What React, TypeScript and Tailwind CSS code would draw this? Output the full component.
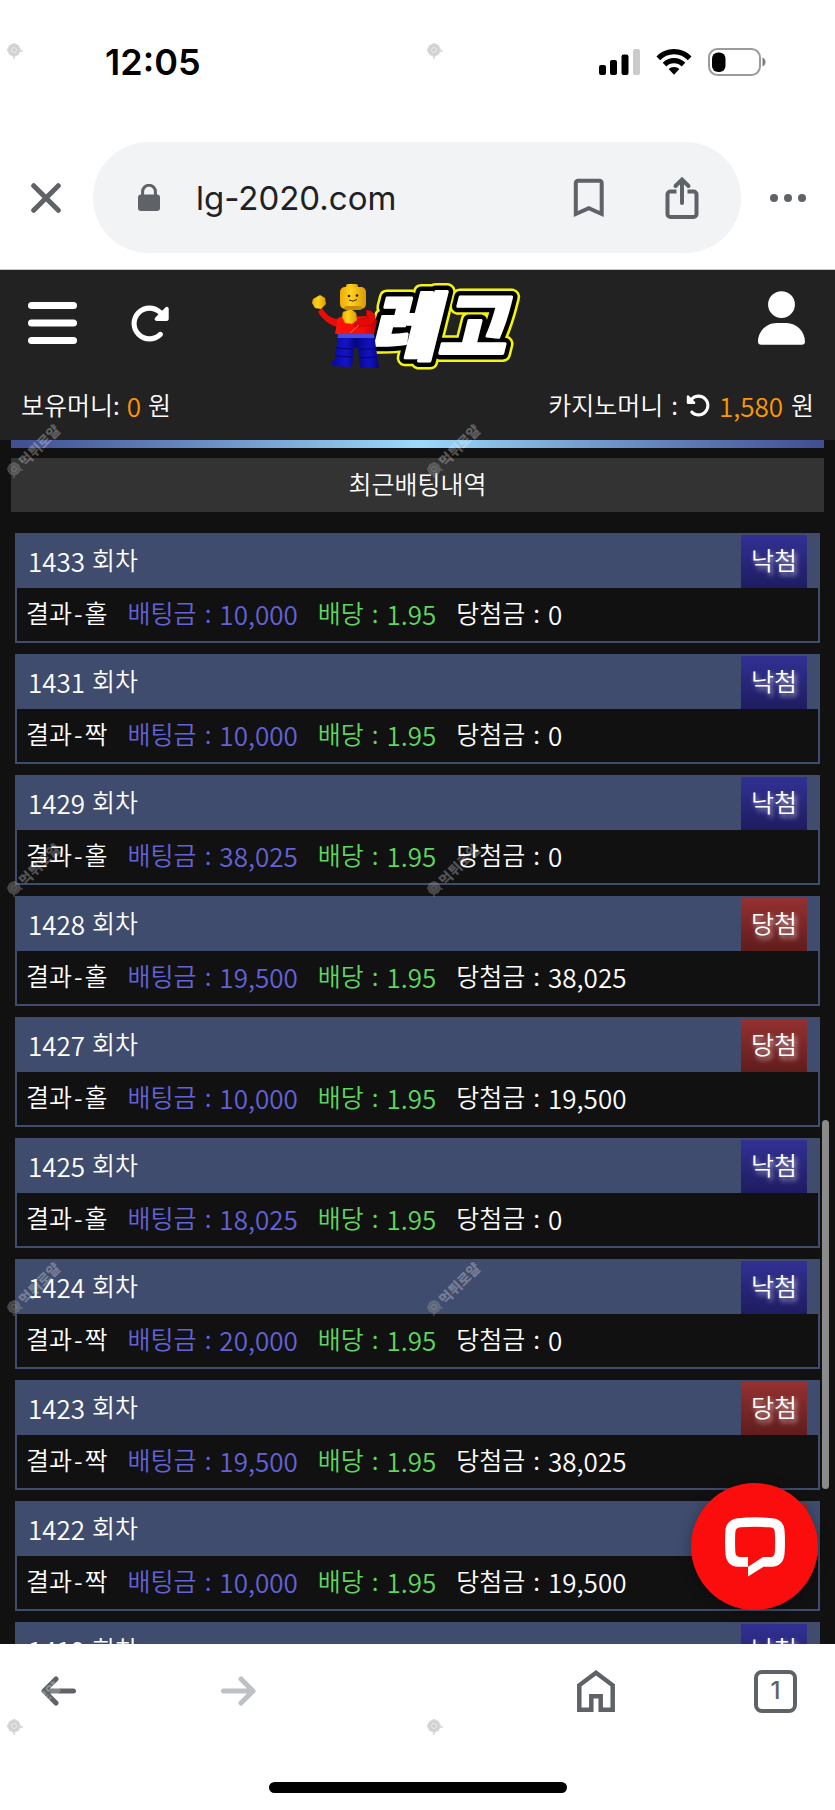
import React from "react";
import { FaRotateLeft, FaRotateRight, FaUser } from "react-icons/fa6";

type Bet = {
  round: number;
  pick: string;
  stake: string;
  odds: string;
  payout: string;
  won: boolean;
};

const bets: Bet[] = [
  { round: 1433, pick: "홀", stake: "10,000", odds: "1.95", payout: "0", won: false },
  { round: 1431, pick: "짝", stake: "10,000", odds: "1.95", payout: "0", won: false },
  { round: 1429, pick: "홀", stake: "38,025", odds: "1.95", payout: "0", won: false },
  { round: 1428, pick: "홀", stake: "19,500", odds: "1.95", payout: "38,025", won: true },
  { round: 1427, pick: "홀", stake: "10,000", odds: "1.95", payout: "19,500", won: true },
  { round: 1425, pick: "홀", stake: "18,025", odds: "1.95", payout: "0", won: false },
  { round: 1424, pick: "짝", stake: "20,000", odds: "1.95", payout: "0", won: false },
  { round: 1423, pick: "짝", stake: "19,500", odds: "1.95", payout: "38,025", won: true },
  { round: 1422, pick: "짝", stake: "10,000", odds: "1.95", payout: "19,500", won: true },
  { round: 1419, pick: "홀", stake: "10,000", odds: "1.95", payout: "0", won: false },
];

function StatusBar() {
  return (
    <div className="flex h-[124px] shrink-0 items-center justify-between pr-[69px] pl-[105px]">
      <span className="text-4xl leading-10 font-semibold text-black">12:05</span>
      <div className="flex items-center gap-4">
        <svg width="41" height="26" viewBox="0 0 41 26" aria-hidden="true">
          <rect x="0" y="16" width="7" height="10" rx="2" />
          <rect x="11" y="11" width="7" height="15" rx="2" />
          <rect x="22.500" y="5.500" width="7" height="20.500" rx="2" />
          <rect x="34" y="0" width="7" height="26" rx="2" fill="#cbcbcb" />
        </svg>
        <svg width="36" height="26" viewBox="0 0 36 26" aria-hidden="true">
          <path d="M0.500 7.500C5 2.800 11 0 18 0s13 2.800 17.500 7.500L31.800 11.300C28.200 7.600 23.500 5.300 18 5.300S7.800 7.600 4.200 11.300Z" />
          <path d="M6.700 13.800C9.700 10.800 13.500 9 18 9s8.300 1.800 11.300 4.800L25.600 17.500C23.600 15.500 21 14.300 18 14.300s-5.600 1.200-7.600 3.200Z" />
          <path d="M12.600 20C14 18.700 15.900 17.900 18 17.900s4 .8 5.400 2.100L18 25.700Z" />
        </svg>
        <svg width="58" height="28" viewBox="0 0 58 28" aria-hidden="true">
          <rect x="1" y="1" width="51" height="26" rx="8.500" fill="none" stroke="#9b9b9b" strokeWidth="2" />
          <rect x="4" y="4.500" width="13.500" height="19.500" rx="6" />
          <path d="M54.500 9.500c2 .8 3 2.500 3 4.500s-1 3.700-3 4.500Z" fill="#7e7e7e" />
        </svg>
      </div>
    </div>
  );
}

function AddressBar() {
  return (
    <div className="flex shrink-0 items-center border-b border-[#c9c9c9] pt-[18px] pb-4 text-[#5f6368]">
      <button type="button" aria-label="닫기" className="flex h-12 w-[93px] items-center pl-[31px]">
        <svg width="30" height="30" viewBox="0 0 30 30" fill="none" stroke="currentColor" strokeWidth="5" strokeLinecap="round">
          <path d="M2.700 2.700 27.300 27.300M27.300 2.700 2.700 27.300" />
        </svg>
      </button>
      <div className="flex h-[111px] flex-1 items-center rounded-full bg-[#f1f3f5] pr-[42px] pl-[45px]">
        <svg width="22" height="28" viewBox="0 0 22 28" aria-hidden="true">
          <rect x="0" y="10.500" width="22" height="16.500" rx="3" fill="currentColor" />
          <path d="M4.600 12V7.700a6.400 6.400 0 0 1 12.800 0V12" fill="none" stroke="currentColor" strokeWidth="3" />
        </svg>
        <a href="#" className="ml-9 flex-1 text-[33px] leading-10 text-[#202124]">
          lg-2020.com
        </a>
        <button type="button" aria-label="북마크" className="flex w-12 justify-center">
          <svg width="32" height="40" viewBox="0 0 32 40" fill="none" stroke="currentColor" strokeWidth="4">
            <path d="M2.800 36V5a2.200 2.200 0 0 1 2.200-2.200h21.500A2.200 2.200 0 0 1 28.700 5V36L15.800 30.200Z" />
          </svg>
        </button>
        <button type="button" aria-label="공유" className="ml-[52px] flex w-[34px] justify-center">
          <svg width="34" height="44" viewBox="0 0 34 44" fill="none" stroke="currentColor" strokeWidth="4">
            <path d="M11.500 15.500H5.500a3 3 0 0 0-3 3V38a3 3 0 0 0 3 3H28.500a3 3 0 0 0 3-3V18.500a3 3 0 0 0-3-3H22.500" />
            <path d="M17 27V4M10.500 10 17 3.500 23.500 10" strokeLinecap="round" />
          </svg>
        </button>
      </div>
      <button type="button" aria-label="메뉴 더보기" className="flex h-12 w-[94px] items-center justify-center">
        <svg width="36" height="8" viewBox="0 0 36 8" fill="currentColor">
          <circle cx="4" cy="4" r="4" />
          <circle cx="18" cy="4" r="4" />
          <circle cx="32" cy="4" r="4" />
        </svg>
      </button>
    </div>
  );
}

function Logo() {
  return (
    <svg width="220" height="106" viewBox="0 0 220 106" role="img" aria-label="레고">
      <defs>
        <linearGradient id="skin" x1="0" x2="1">
          <stop offset="0" stopColor="#f0a800" />
          <stop offset=".4" stopColor="#ffd21f" />
          <stop offset="1" stopColor="#d99a00" />
        </linearGradient>
        <linearGradient id="shirt" x1="0" x2="1">
          <stop offset="0" stopColor="#ff1408" />
          <stop offset=".7" stopColor="#f50c06" />
          <stop offset="1" stopColor="#b80404" />
        </linearGradient>
        <linearGradient id="legs" x1="0" x2="1">
          <stop offset="0" stopColor="#0808a4" />
          <stop offset=".3" stopColor="#1414c8" />
          <stop offset=".5" stopColor="#060684" />
          <stop offset=".8" stopColor="#1212c0" />
          <stop offset="1" stopColor="#05057c" />
        </linearGradient>
      </defs>
      <g
        fontFamily="'Noto Sans CJK KR', sans-serif"
        fontWeight="900"
        fontStyle="italic"
        fontSize="74"
        strokeLinejoin="round"
      >
        <text x="57" y="84" fill="#f4f410" stroke="#f4f410" strokeWidth="17">레고</text>
        <text x="57" y="84" fill="#000" stroke="#000" strokeWidth="12">레고</text>
        <text x="57" y="84" fill="#fff" stroke="#fff" strokeWidth="3">레고</text>
      </g>
      <g transform="translate(0 13)">
        <path d="M10 25C14 31 18 35 25 36l8-1v9C23 46 13 40 6 29Z" fill="#e60d08" />
        <path d="M1 16l7-4 5 3 1 6-5 5-6-1-3-5Z" fill="url(#skin)" />
        <path d="M28 34q-3 1-3 6L23 51h39l3-13q-1-4-6-5Z" fill="url(#shirt)" />
        <rect x="34" y="1" width="12" height="6" rx="2" fill="url(#skin)" />
        <rect x="28" y="4" width="26" height="22" rx="5" fill="url(#skin)" />
        <rect x="32" y="23" width="18" height="4" rx="2" fill="#c88b00" />
        <circle cx="37" cy="13" r="1.300" fill="#2c2100" />
        <circle cx="45" cy="12.500" r="1.300" fill="#2c2100" />
        <path d="M37 17q4 2.500 8-.5" fill="none" stroke="#3c2a00" strokeWidth="1" />
        <path d="M43 37l12-2-1-8q7 0 9 6 1 8-6 9.500l-14 1.500Z" fill="#e30a06" stroke="#a60503" strokeWidth=".6" />
        <path d="M31 29l8-3 5 4 1 7-5 4-7-1-3-6Z" fill="url(#skin)" stroke="#b27800" strokeWidth=".5" />
        <path d="M38 50l9-8" stroke="#ff6a60" strokeWidth="1" />
        <path d="M26 51h36l5 34H48L46 65H42L40 84l-20-1q-1-5 3-7Z" fill="url(#legs)" />
        <path d="M26 51h36l.500 4H25.500Z" fill="#4a4adf" />
        <path d="M24 65l16 1M23 73l17 1M47 66l17 0M48 75l17-1" stroke="#050570" strokeWidth="1.200" />
      </g>
    </svg>
  );
}

function SiteHeader() {
  return (
    <header className="shrink-0 bg-[#222] text-white">
      <div className="relative flex h-[106px] items-center justify-between pr-[30px] pl-7">
        <div className="flex items-center gap-[52px]">
          <button type="button" aria-label="메뉴">
            <svg width="49" height="42" viewBox="0 0 49 42" fill="currentColor">
              <rect width="49" height="7" rx="3.500" />
              <rect y="17.500" width="49" height="7" rx="3.500" />
              <rect y="35" width="49" height="7" rx="3.500" />
            </svg>
          </button>
          <button type="button" aria-label="새로고침">
            <FaRotateRight size={41} />
          </button>
        </div>
        <a href="#" className="absolute top-0 left-1/2 -ml-[106px]">
          <Logo />
        </a>
        <button type="button" aria-label="내 정보" className="pb-[10px]">
          <FaUser className="h-[54px] w-[47px]" />
        </button>
      </div>
      <div className="flex h-16 items-center justify-between px-[21px] pb-[6px] text-[25px] font-[350]">
        <p className="flex items-center gap-[7px]">
          보유머니: <span className="text-[26px] text-[#ff9800]">0</span> 원
        </p>
        <p className="flex items-center gap-2">
          <span>카지노머니</span>
          <span>:</span>
          <button type="button" aria-label="카지노머니 새로고침">
            <FaRotateLeft size={25} />
          </button>
          <span className="text-[26px] text-[#ff9800]">1,580</span>
          <span>원</span>
        </p>
      </div>
    </header>
  );
}

function Field({ label, value, className }: { label: string; value: string; className: string }) {
  return (
    <span className={`flex items-center gap-2 ${className}`}>
      <span>{label}</span>
      <span>:</span>
      <span className="text-[26px]">{value}</span>
    </span>
  );
}

function BetCard({ bet }: { bet: Bet }) {
  const badge = bet.won ? "from-[#953131] to-[#601c1c]" : "from-[#323194] to-[#1e1c60]";
  return (
    <li className="border-2 border-[#3f4c6d]">
      <div className="flex h-[53px] items-center justify-between bg-[#3f4c6d] px-[11px]">
        <h3 className="flex items-center gap-[7px] pb-[3px]">
          <span className="text-[26px]">{bet.round}</span> 회차
        </h3>
        <span
          className={`flex h-full w-[66px] items-center justify-center bg-linear-to-b pb-[3px] [text-shadow:2px_3px_5px_rgba(255,255,255,0.7)] ${badge}`}
        >
          {bet.won ? "당첨" : "낙첨"}
        </span>
      </div>
      <p className="flex h-[53px] items-center gap-5 bg-[#111] px-[9px] pb-[3px]">
        <span className="flex items-center gap-[2px]">
          <span>결과</span>
          <span>-</span>
          <span>{bet.pick}</span>
        </span>
        <Field label="배팅금" value={bet.stake} className="text-[#6462d8]" />
        <Field label="배당" value={bet.odds} className="text-[#5fd65f]" />
        <Field label="당첨금" value={bet.payout} className="text-white" />
      </p>
    </li>
  );
}

function ChatButton() {
  return (
    <button
      type="button"
      aria-label="채팅 상담"
      className="absolute right-[17px] bottom-[34px] flex size-[127px] items-center justify-center rounded-full bg-[#fb0d0d] shadow-[0_2px_14px_rgba(0,0,0,0.3)]"
    >
      <svg width="60" height="60" viewBox="0 0 60 60">
        <path
          fill="#fff"
          fillRule="evenodd"
          d="M13 1.200Q30-.6 47 1.200C55 2 59 6.500 59.500 13Q60.500 25 59.500 37C59 45 54 49.700 47 49.700H38.500L23 59.500V49.700H13C5 49.700 1 44 .5 37Q-.5 25 .5 13C1 6 6 2 13 1.200ZM15.500 10.300C12 10.600 10.500 12.300 10.300 15.500Q9.800 25 10.300 35C10.500 38.300 12 40 15.500 40H23V49.700L38 40H45C48.500 40 49.700 38 49.800 35Q50.500 25 49.800 15.500C49.700 12 48.500 10.600 45 10.300Q30 9.300 15.500 10.300Z"
        />
      </svg>
    </button>
  );
}

function BrowserNav() {
  return (
    <footer className="flex h-[166px] shrink-0 flex-col justify-between bg-white pb-[17px] text-[#5f6368]">
      <nav className="flex h-[94px] items-center justify-between px-[38px]">
        <div className="flex gap-[139px]">
          <button type="button" aria-label="뒤로">
            <svg width="40" height="30" viewBox="0 0 40 30" fill="none" stroke="currentColor" strokeWidth="5" strokeLinecap="round" strokeLinejoin="round">
              <path d="M35.500 15H6M18 3 6 15 18 27" />
            </svg>
          </button>
          <button type="button" aria-label="앞으로" disabled className="text-[#bdc1c6]">
            <svg width="40" height="30" viewBox="0 0 40 30" fill="none" stroke="currentColor" strokeWidth="5" strokeLinecap="round" strokeLinejoin="round">
              <path d="M6.500 15H36M24 3 36 15 24 27" />
            </svg>
          </button>
        </div>
        <div className="flex items-center gap-[139px]">
          <button type="button" aria-label="홈">
            <svg width="38" height="42" viewBox="0 0 38 42" fill="none" stroke="currentColor" strokeWidth="4.500">
              <path d="M2.300 39.700V15.300L19 2.800 35.700 15.300V39.700H23.700V26.200H14.300V39.700Z" />
            </svg>
          </button>
          <button
            type="button"
            aria-label="탭 1개"
            className="flex size-[43px] items-center justify-center rounded-lg border-4 border-[#5f6368] text-2xl leading-6 font-medium"
          >
            1
          </button>
        </div>
      </nav>
      <div className="mx-auto h-[11px] w-[298px] rounded-full bg-black" />
    </footer>
  );
}

function Watermarks() {
  return (
    <div aria-hidden="true" className="pointer-events-none absolute inset-0 grid auto-rows-[419px] grid-cols-[420px_420px] overflow-hidden">
      {Array.from({ length: 10 }, (_, i) => (
        <svg key={i} width="90" height="72" viewBox="0 0 90 72">
          <g opacity=".4">
            <path d="M14 44l4 2 2 4-2 4-4 2-4-2-2-4 2-4Z" fill="#8c8c8c" stroke="#9a9a9a" strokeWidth="2" />
            <circle cx="14" cy="50" r="2.500" fill="none" stroke="#d0d0d0" strokeWidth="1" />
            <path d="M14 56v3M20 51h3" stroke="#9a9a9a" strokeWidth="1.500" />
          </g>
          <text
            x="39"
            y="32"
            transform="rotate(-45 39 26)"
            textAnchor="middle"
            fontFamily="'Noto Sans CJK KR', sans-serif"
            fontWeight="900"
            fontSize="14"
            fill="#fff"
            fillOpacity=".28"
          >
            먹튀로얄
          </text>
        </svg>
      ))}
    </div>
  );
}

export default function App() {
  return (
    <div className="relative flex h-screen flex-col overflow-hidden bg-white font-['Inter','Noto_Sans_CJK_KR',sans-serif]">
      <StatusBar />
      <AddressBar />
      <div className="relative flex min-h-0 flex-1 flex-col bg-[#111] font-['Noto_Sans_CJK_KR',sans-serif] text-white">
        <SiteHeader />
        <main className="min-h-0 flex-1 overflow-hidden px-[11px] text-[25px] font-[350]">
          <div className="h-2 bg-linear-to-r from-[#414d91] via-[#9cdafb] to-[#414d91]" />
          <h2 className="mt-[10px] flex h-[54px] items-center justify-center bg-[#333] pb-[3px]">최근배팅내역</h2>
          <ul className="mt-[21px] flex flex-col gap-[11px] px-1">
            {bets.map((bet) => (
              <BetCard key={bet.round} bet={bet} />
            ))}
          </ul>
        </main>
        <div className="absolute right-[6px] bottom-[155px] h-[369px] w-[7px] rounded-full bg-[#8a8a8a]" />
        <ChatButton />
      </div>
      <BrowserNav />
      <Watermarks />
    </div>
  );
}
